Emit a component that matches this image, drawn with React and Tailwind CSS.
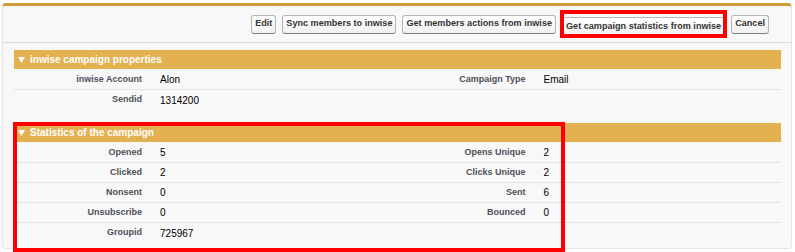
import React from "react";

// --- data ---
const buttons = [
  { label: "Edit" },
  { label: "Sync members to inwise" },
  { label: "Get members actions from inwise" },
  { label: "Get campaign statistics from inwise", marked: true },
  { label: "Cancel" },
];

const propertyRows = [
  ["inwise Account", "Alon", "Campaign Type", "Email"],
  ["Sendid", "1314200", "", ""],
];

const statRows = [
  ["Opened", "5", "Opens Unique", "2"],
  ["Clicked", "2", "Clicks Unique", "2"],
  ["Nonsent", "0", "Sent", "6"],
  ["Unsubscribe", "0", "Bounced", "0"],
  ["Groupid", "725967", "", ""],
];

const Btn = ({ label }) => (
  <button className="h-[19px] px-[3px] border border-[#b5b5b5] border-b-[#7f7f7f] rounded-[3px] bg-linear-to-b from-white to-[#f1f1f1] text-[9.1px] font-bold text-[#333] leading-none whitespace-nowrap">
    {label}
  </button>
);

const SubHeader = ({ title }) => (
  <div className="h-[19px] bg-[#e3b14f] flex items-center pl-[4px] gap-[5px]">
    <svg width="7" height="6" viewBox="0 0 7 6">
      <polygon points="0,0 7,0 3.5,6" fill="#ffffff" />
    </svg>
    <h3 className="text-[10px] font-bold text-white leading-none">{title}</h3>
  </div>
);

const Row = ({ cells, last }) => (
  <div
    className={`h-[20px] grid grid-cols-[18%_32%_18%_32%] items-center ${
      last ? "" : "border-b border-[#e3e3e3]"
    }`}
  >
    <div className="text-right pr-[10px] text-[9px] font-bold text-[#4f4f5a]">{cells[0]}</div>
    <div className="pl-[8px] text-[10px] text-black">{cells[1]}</div>
    <div className="text-right pr-[10px] text-[9px] font-bold text-[#4f4f5a]">{cells[2]}</div>
    <div className="pl-[8px] text-[10px] text-black">{cells[3]}</div>
  </div>
);

export default function App() {
  return (
    <div
      className="w-[795px] h-[252px] bg-white pt-[3px] pl-[2px] overflow-hidden"
      style={{ fontFamily: '"Liberation Sans", Arial, sans-serif' }}
    >
      <div className="w-[790px] h-[246px] bg-[#f8f8f8] border border-[#e6e6e6] border-t-[3px] border-t-[#cf9d3b] rounded-[4px]">
        {/* buttons */}
        <div className="h-[37px] border-b border-[#dbdbdb] flex items-center justify-end gap-[6px] pr-[22px]">
          {buttons.map((b) =>
            b.marked ? (
              <div key={b.label} className="relative">
                <Btn label={b.label} />
                <div className="absolute -top-[2px] -bottom-[2px] -left-[2px] -right-[2px] border-4 border-[#ff0000] pointer-events-none" />
              </div>
            ) : (
              <Btn key={b.label} label={b.label} />
            )
          )}
        </div>

        <div className="pl-[11px] pr-[10px]">
          {/* properties */}
          <div className="mt-[7px]">
            <SubHeader title="inwise campaign properties" />
            <div className="pt-[1px]">
              {propertyRows.map((r, i) => (
                <Row key={i} cells={r} last={i === propertyRows.length - 1} />
              ))}
            </div>
          </div>

          {/* statistics */}
          <div className="relative mt-[13px]">
            <SubHeader title="Statistics of the campaign" />
            <div className="pt-[1px]">
              {statRows.map((r, i) => (
                <Row key={i} cells={r} last={i === statRows.length - 1} />
              ))}
            </div>
            <div className="absolute -top-[1px] -left-[1px] w-[552px] h-[130px] border-4 border-[#ff0000] pointer-events-none" />
          </div>
        </div>
      </div>
    </div>
  );
}
